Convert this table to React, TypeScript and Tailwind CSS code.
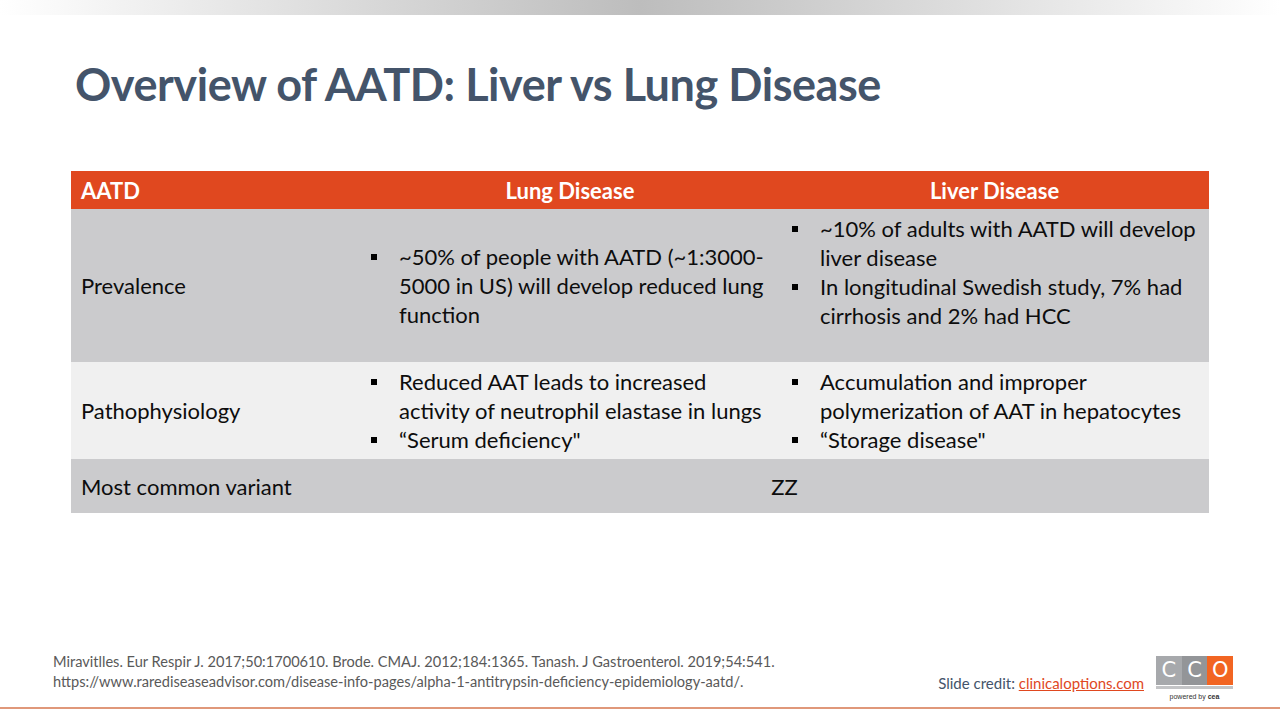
import React from 'react';

function Bullet({ lines }: { lines: string[] }) {
  return (
    <div className="flex">
      <div className="w-[28px] h-[29px] flex items-center shrink-0">
        <div className="w-[6px] h-[6px] bg-black" />
      </div>
      <div>
        {lines.map((l, i) => (
          <div key={i} className="leading-[29px] whitespace-nowrap">
            {l}
          </div>
        ))}
      </div>
    </div>
  );
}

function Logo() {
  return (
    <div className="flex flex-col items-center w-[77px]">
      <div className="flex w-[77px] h-[29px] font-['DejaVu_Sans',sans-serif]">
        <div className="flex-1 bg-[#a7a9ac] text-white flex items-center justify-center text-[21px] leading-none">C</div>
        <div className="flex-1 bg-[#939598] text-white flex items-center justify-center text-[21px] leading-none">C</div>
        <div className="flex-1 bg-[#f26522] text-white flex items-center justify-center text-[21px] leading-none">O</div>
      </div>
      <div className="w-[77px] h-[3px] bg-[#c3c4c6] mt-[1px]" />
      <div className="text-[7px] leading-[9px] mt-[3px] text-[#333] font-['Liberation_Sans',sans-serif]">
        powered by <span className="font-bold">cea</span>
      </div>
    </div>
  );
}

export default function App() {
  return (
    <div className="w-[1280px] h-[720px] bg-white flex flex-col font-['Lato',sans-serif] text-[#0d0d0d] overflow-hidden">
      {/* top gradient */}
      <div className="h-[15px] bg-linear-to-r from-white via-[#bdbdbd] to-white" />

      <h1 className="mt-[42px] pl-[75px] text-[45px] leading-[54px] tracking-[-0.45px] font-bold text-[#44546a]">
        Overview of AATD: Liver vs Lung Disease
      </h1>

      {/* table */}
      <div className="mt-[60px] ml-[71px] w-[1138px] grid grid-cols-[289px_420px_429px] text-[22px]">
        <div className="bg-[#e0481f] h-[38px] flex items-center pl-[10px] text-white font-bold">AATD</div>
        <div className="bg-[#e0481f] h-[38px] flex items-center justify-center text-white font-bold">Lung Disease</div>
        <div className="bg-[#e0481f] h-[38px] flex items-center justify-center text-white font-bold">Liver Disease</div>

        <div className="bg-[#cbcbcd] h-[153px] flex items-center pl-[10px]">Prevalence</div>
        <div className="bg-[#cbcbcd] h-[153px] flex items-center pl-[11px]">
          <Bullet lines={['~50% of people with AATD (~1:3000-', '5000 in US) will develop reduced lung', 'function']} />
        </div>
        <div className="bg-[#cbcbcd] h-[153px] pl-[12px] pt-[5px]">
          <Bullet lines={['~10% of adults with AATD will develop', 'liver disease']} />
          <Bullet lines={['In longitudinal Swedish study, 7% had', 'cirrhosis and 2% had HCC']} />
        </div>

        <div className="bg-[#f0f0f0] h-[97px] flex items-center pl-[10px]">Pathophysiology</div>
        <div className="bg-[#f0f0f0] h-[97px] flex flex-col justify-center pl-[11px]">
          <Bullet lines={['Reduced AAT leads to increased', 'activity of neutrophil elastase in lungs']} />
          <Bullet lines={['“Serum deficiency"']} />
        </div>
        <div className="bg-[#f0f0f0] h-[97px] flex flex-col justify-center pl-[12px]">
          <Bullet lines={['Accumulation and improper', 'polymerization of AAT in hepatocytes']} />
          <Bullet lines={['“Storage disease"']} />
        </div>

        <div className="bg-[#cbcbcd] h-[54px] flex items-center pl-[10px]">Most common variant</div>
        <div className="bg-[#cbcbcd] h-[54px] col-span-2 flex items-center justify-center">ZZ</div>
      </div>

      <div className="flex-1" />

      {/* footer */}
      <div className="flex items-end justify-between pl-[53px] pr-[47px]">
        <div className="text-[14.6px] leading-[20px] text-[#595959] mb-[15px]">
          <div>Miravitlles. Eur Respir J. 2017;50:1700610. Brode. CMAJ. 2012;184:1365. Tanash. J Gastroenterol. 2019;54:541.</div>
          <div>https://www.rarediseaseadvisor.com/disease-info-pages/alpha-1-antitrypsin-deficiency-epidemiology-aatd/.</div>
        </div>
        <div className="flex items-end gap-[12px]">
          <div className="text-[15px] leading-[20px] text-[#44546a] mb-[14px]">
            Slide credit: <span className="text-[#e0481f] underline">clinicaloptions.com</span>
          </div>
          <div className="mb-[6px]">
            <Logo />
          </div>
        </div>
      </div>

      <div className="h-[2px] bg-[#e0987a]" />
      <div className="h-[11px]" />
    </div>
  );
}
